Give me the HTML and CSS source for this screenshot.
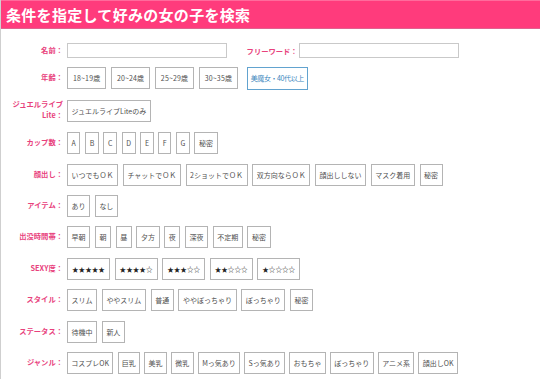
FILE: index.html
```html
<!DOCTYPE html>
<html lang="ja">
<head>
<meta charset="utf-8">
<link rel="stylesheet" href="styles.css">
</head>
<body>
<div class="panel">
  <h1 class="title">条件を指定して好みの女の子を検索</h1>
  <div class="form">
    <div class="row row-first">
      <div class="label">名前：</div>
      <div class="vals">
        <input class="text" type="text">
        <span class="label label-inline">フリーワード：</span>
        <input class="text" type="text">
      </div>
    </div>
    <div class="row">
      <div class="label">年齢：</div>
      <div class="vals">
        <span class="btn btn-age">18~19歳</span><span class="btn btn-age">20~24歳</span><span class="btn btn-age">25~29歳</span><span class="btn btn-age">30~35歳</span><span class="btn btn-blue">美魔女・40代以上</span>
      </div>
    </div>
    <div class="row">
      <div class="label label-two">ジュエルライブ<br>Lite：</div>
      <div class="vals"><span class="btn">ジュエルライブLiteのみ</span></div>
    </div>
    <div class="row">
      <div class="label">カップ数：</div>
      <div class="vals">
        <span class="btn">A</span><span class="btn">B</span><span class="btn">C</span><span class="btn">D</span><span class="btn">E</span><span class="btn">F</span><span class="btn">G</span><span class="btn">秘密</span>
      </div>
    </div>
    <div class="row">
      <div class="label">顔出し：</div>
      <div class="vals">
        <span class="btn">いつでもＯＫ</span><span class="btn">チャットでＯＫ</span><span class="btn">2ショットでＯＫ</span><span class="btn">双方向ならＯＫ</span><span class="btn">顔出ししない</span><span class="btn">マスク着用</span><span class="btn">秘密</span>
      </div>
    </div>
    <div class="row">
      <div class="label">アイテム：</div>
      <div class="vals"><span class="btn">あり</span><span class="btn">なし</span></div>
    </div>
    <div class="row">
      <div class="label">出没時間帯：</div>
      <div class="vals">
        <span class="btn">早朝</span><span class="btn">朝</span><span class="btn">昼</span><span class="btn">夕方</span><span class="btn">夜</span><span class="btn">深夜</span><span class="btn">不定期</span><span class="btn">秘密</span>
      </div>
    </div>
    <div class="row">
      <div class="label">SEXY度：</div>
      <div class="vals">
        <span class="btn stars">★★★★★</span><span class="btn stars">★★★★☆</span><span class="btn stars">★★★☆☆</span><span class="btn stars">★★☆☆☆</span><span class="btn stars">★☆☆☆☆</span>
      </div>
    </div>
    <div class="row">
      <div class="label">スタイル：</div>
      <div class="vals">
        <span class="btn">スリム</span><span class="btn">ややスリム</span><span class="btn">普通</span><span class="btn">ややぽっちゃり</span><span class="btn">ぽっちゃり</span><span class="btn">秘密</span>
      </div>
    </div>
    <div class="row">
      <div class="label">ステータス：</div>
      <div class="vals"><span class="btn">待機中</span><span class="btn">新人</span></div>
    </div>
    <div class="row">
      <div class="label">ジャンル：</div>
      <div class="vals vals-tight">
        <span class="btn">コスプレOK</span><span class="btn">巨乳</span><span class="btn">美乳</span><span class="btn">微乳</span><span class="btn">Mっ気あり</span><span class="btn">Sっ気あり</span><span class="btn">おもちゃ</span><span class="btn">ぽっちゃり</span><span class="btn">アニメ系</span><span class="btn">顔出しOK</span>
      </div>
    </div>
  </div>
</div>
</body>
</html>
```

FILE: styles.css
```css
* { box-sizing: border-box; }
html, body { margin: 0; padding: 0; background: #fff; }
body {
  width: 540px;
  height: 379px;
  overflow: hidden;
  font-family: "Noto Sans CJK JP", "Noto Sans", sans-serif;
}
.panel {
  width: 560px;
  min-height: 379px;
  border-left: 1px solid #cfcfcf;
}
.title {
  margin: 0;
  height: 29px;
  padding: 3px 0 0 5px;
  background: #ff3b7c;
  border-top: 1px solid #ff6b9c;
  border-bottom: 1px solid #e0628f;
  color: #fff;
  font-size: 15px;
  font-weight: bold;
  line-height: 21px;
  letter-spacing: 0.3px;
}
.form {
  padding-top: 14px;
}
.row {
  display: grid;
  grid-template-columns: 62px 1fr;
  column-gap: 4px;
  align-items: center;
  margin-bottom: 9.4px;
}
.row-first {
  margin-bottom: 8.5px;
}
.label {
  text-align: right;
  color: #e8417c;
  font-size: 7.3px;
  font-weight: bold;
  line-height: 12px;
  padding-bottom: 2px;
}
.label-two {
  line-height: 11px;
}
.label-inline {
  display: inline-block;
  margin-left: 15px;
  margin-right: -3px;
  padding-bottom: 0;
}
.vals {
  display: flex;
  align-items: center;
  flex-wrap: nowrap;
  gap: 4.6px;
}
.vals-tight {
  gap: 4.2px;
}
.vals-tight .btn {
  padding: 0 3.3px;
}
.text {
  width: 160px;
  height: 15px;
  margin: 0;
  border: 1px solid #c9c9c9;
  background: #fff;
  padding: 0;
}
.btn {
  display: inline-block;
  height: 22px;
  line-height: 20px;
  padding: 0 3.6px;
  border: 1px solid #b4b4b4;
  background: #fff;
  color: #505050;
  font-size: 7px;
  white-space: nowrap;
}
.btn-age {
  padding: 0 5px;
  letter-spacing: 0.15px;
}
.btn-blue {
  margin-left: 4px;
  border-color: #62a3cf;
  color: #3b86bd;
  height: 23px;
  line-height: 21px;
  padding: 0 3px;
  letter-spacing: -0.4px;
}
.stars {
  color: #222;
  font-size: 6.6px;
  padding: 0 4px;
}
```
